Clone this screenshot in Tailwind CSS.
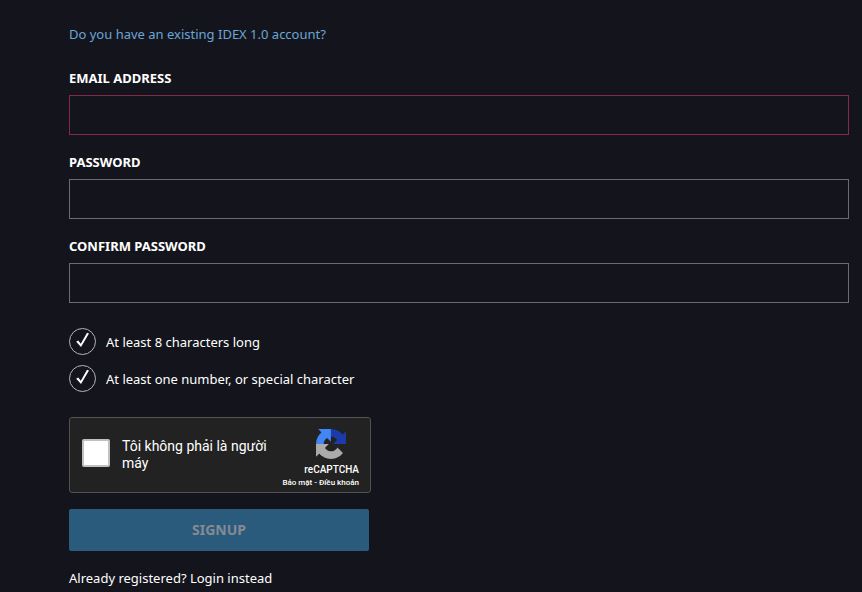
<!DOCTYPE html>
<html lang="en">
<head>
    <meta charset="UTF-8">
    <meta name="viewport" content="width=device-width, initial-scale=1.0">
    <title>Sign up</title>
    <script src="https://cdn.jsdelivr.net/npm/@tailwindcss/browser@4"></script>
</head>
<body class="bg-[#14151c] text-white font-['Noto_Sans',sans-serif] text-[13px] leading-5 min-h-screen flex flex-col">
    <main class="flex-1 pt-6 pl-[69px] pr-[13px]">
        <a href="#" class="block w-fit text-[#6ba5d7]">Do you have an existing IDEX 1.0 account?</a>

        <form class="mt-6">
            <div class="space-y-[17px]">
                <div>
                    <label for="email" class="block mb-[7px] font-bold">EMAIL ADDRESS</label>
                    <input type="email" id="email" class="block w-full h-10 px-3 border border-[#86294a] bg-transparent outline-none">
                </div>
                <div>
                    <label for="password" class="block mb-[7px] font-bold">PASSWORD</label>
                    <input type="password" id="password" class="block w-full h-10 px-3 border border-[#6b6c70] bg-transparent outline-none">
                </div>
                <div>
                    <label for="confirm" class="block mb-[7px] font-bold">CONFIRM PASSWORD</label>
                    <input type="password" id="confirm" class="block w-full h-10 px-3 border border-[#6b6c70] bg-transparent outline-none">
                </div>
            </div>

            <ul class="mt-[25px] space-y-[10px]">
                <li class="flex items-center gap-[10px]">
                    <svg class="size-[27px]" viewBox="0 0 27 27" fill="none">
                        <circle cx="13.5" cy="13.5" r="13" stroke="#b4b4b8"/>
                        <path d="M7.2 13.8l2-1.4 2.6 3.4L18 4.8l2 .8L12 19z" fill="#fff"/>
                    </svg>
                    <span>At least 8 characters long</span>
                </li>
                <li class="flex items-center gap-[10px]">
                    <svg class="size-[27px]" viewBox="0 0 27 27" fill="none">
                        <circle cx="13.5" cy="13.5" r="13" stroke="#b4b4b8"/>
                        <path d="M7.2 13.8l2-1.4 2.6 3.4L18 4.8l2 .8L12 19z" fill="#fff"/>
                    </svg>
                    <span>At least one number, or special character</span>
                </li>
            </ul>

            <!-- captcha -->
            <div class="mt-[25px] w-[302px] h-[76px] flex justify-between pl-3 pr-[11px] rounded-[3px] border border-[#525252] bg-[#222] font-[Roboto,sans-serif]">
                <div class="flex items-center gap-3 pb-1">
                    <input type="checkbox" id="robot" class="appearance-none size-7 shrink-0 rounded-[2px] border-2 border-[#c1c1c1] bg-white">
                    <label for="robot" class="w-[152px] pt-1 text-sm leading-[17px]">Tôi không phải là người máy</label>
                </div>
                <div class="flex flex-col items-end pt-[11px]">
                    <svg class="size-[30px] mr-[13px]" viewBox="0 0 64 64">
                        <path fill="#1c3aa9" d="M64 31.955l-.033-1.37V4.687l-7.16 7.16C50.948 4.674 42.033.093 32.05.093c-10.4 0-19.622 4.96-25.458 12.64l11.736 11.86a15.55 15.55 0 0 1 4.754-5.334c2.05-1.6 4.952-2.906 8.968-2.906.485 0 .86.057 1.135.163 4.976.393 9.288 3.14 11.828 7.124l-8.307 8.307L64 31.953"/>
                        <path fill="#4285f4" d="M31.862.094l-1.37.033H4.594l7.16 7.16C4.58 13.147 0 22.06 0 32.046c0 10.4 4.96 19.622 12.64 25.458L24.5 45.768a15.55 15.55 0 0 1-5.334-4.754c-1.6-2.05-2.906-4.952-2.906-8.968 0-.485.057-.86.163-1.135.393-4.976 3.14-9.288 7.124-11.828l8.307 8.307L31.86.095"/>
                        <path fill="#ababab" d="M.001 32.045l.033 1.37v25.898l7.16-7.16c5.86 7.173 14.774 11.754 24.76 11.754 10.4 0 19.622-4.96 25.458-12.64l-11.736-11.86a15.55 15.55 0 0 1-4.754 5.334c-2.05 1.6-4.952 2.906-8.968 2.906-.485 0-.86-.057-1.135-.163-4.976-.393-9.288-3.14-11.828-7.124l8.307-8.307c-10.522.04-22.4.066-27.295-.005"/>
                    </svg>
                    <span class="mt-[5px] text-[10px] leading-3 font-medium">reCAPTCHA</span>
                    <div class="text-[8px] leading-[14px] font-medium"><a href="#">Bảo mật</a> - <a href="#">Điều khoản</a></div>
                </div>
            </div>

            <button type="submit" disabled class="mt-4 block w-[300px] h-[42px] rounded-[2px] bg-[#2a5a7c] text-[#858b93] text-sm font-bold">SIGNUP</button>
        </form>

        <p class="mt-[17px]">Already registered? <a href="#">Login instead</a></p>
    </main>
</body>
</html>
